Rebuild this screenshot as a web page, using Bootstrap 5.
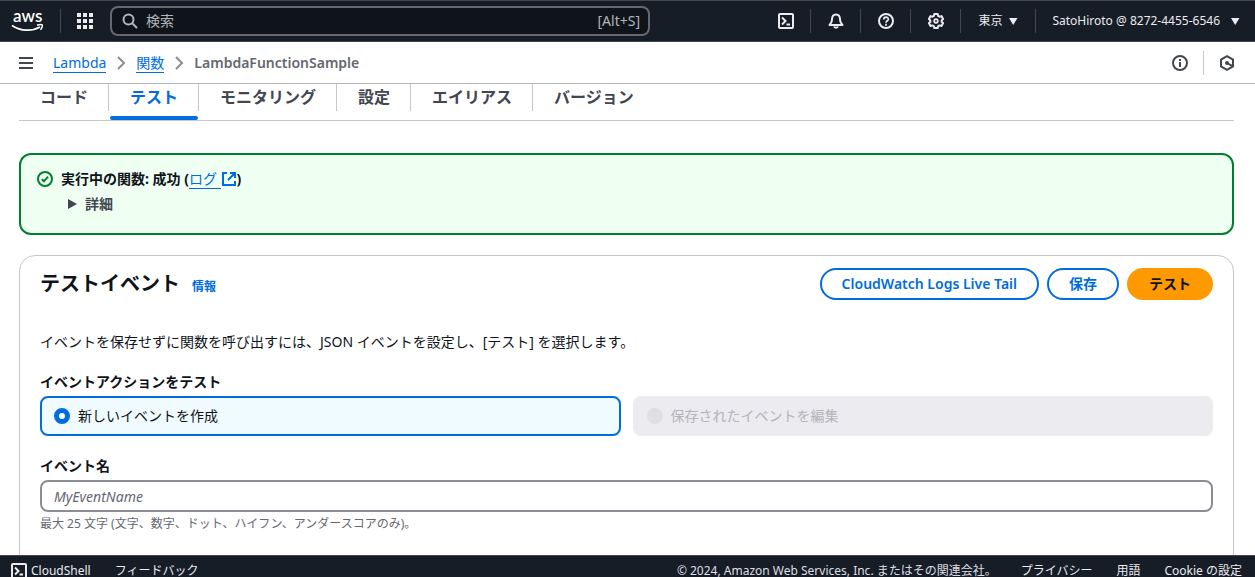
<!DOCTYPE html>
<html lang="ja">
<head>
<meta charset="utf-8">
<meta name="viewport" content="width=device-width, initial-scale=1">
<title>LambdaFunctionSample | 関数 | Lambda</title>
<link rel="stylesheet" href="https://cdn.jsdelivr.net/npm/bootstrap@5.3.0/dist/css/bootstrap.min.css">
<style>
:root { --ink:#0f141a; --navy:#161d26; --blue:#006ce0; --line:#c6c6cd; --slate:#424650; }
body { font-family:"Noto Sans","Noto Sans CJK JP",sans-serif; font-size:14px; line-height:20px; color:var(--ink); }
svg { display:block; flex:none; }
.ico { width:16px; height:16px; fill:none; stroke:currentColor; stroke-width:2; }
.bare { background:none; border:0; padding:0; color:inherit; }

.topbar { height:42px; background:var(--navy); border-top:1px solid var(--slate); border-bottom:1px solid var(--slate); color:#ebebf0; font-size:12px; }
.vline { width:1px; height:24px; background:var(--slate); flex:none; }
.vline-light { background:var(--line); }
.brand { width:60px; padding-left:12px; text-decoration:none; }
.apps { width:49px; padding-right:2px; }
.search { flex:0 1 540px; height:30px; background:var(--ink); border:2px solid #656871; border-radius:8px; padding:0 8px 0 10px; color:#b4b4bb; font-size:14px; }
.search input { color:#fff; min-width:0; outline:0; }
.search input::placeholder { color:#b4b4bb; opacity:1; }
.tool { width:49px; height:30px; }
.region { width:74px; gap:6px; }
.account { padding:0 15px 0 16px; gap:10px; white-space:nowrap; }
.tri { width:10px; height:8px; fill:currentColor; }

.crumbs { height:42px; border-bottom:1px solid #b4b4bb; padding:0 20px 0 18px; color:var(--slate); }
.crumbs a, .loglink { color:var(--blue); text-decoration:none; border-bottom:1px solid var(--blue); }
.crumbs nav { margin-left:19px; }
.crumbs .breadcrumb-item { color:#656871; font-weight:600; padding:0; }
.crumbs .breadcrumb-item a { font-weight:400; display:block; line-height:18px; padding-top:1px; }
.crumbs .breadcrumb-item::before { display:none; }
.chev { color:#8c8c94; margin:0 7px; }
.crumbtools { gap:15px; }

.pagebody { padding:0 21px 0 19px; min-height:0; }
.tabrow { height:37px; border-bottom:1px solid var(--line); font-size:16px; line-height:24px; font-weight:700; }
.tabrow a { color:var(--slate); text-decoration:none; display:block; height:36px; padding:1px 20px 0 21px; position:relative; }
.tabrow li { position:relative; padding-right:1px; }
.tabrow li:not(:last-child)::after { content:""; position:absolute; right:0; top:0; width:1px; height:27px; background:var(--line); }
.tabrow a.active { color:var(--blue); }
.tabrow a.active::after { content:""; position:absolute; left:1px; right:0; bottom:0; height:4px; border-radius:4px; background:var(--blue); }

.flash { background:#effff1; border:2px solid #00802f; border-radius:12px; margin-top:32px; padding:14px 16px 19px; }
.flash .ico { color:#00802f; }
.flash .loglink { display:inline-block; line-height:18px; font-weight:400; }
.flash details { margin:5px 0 0 30px; }
.flash summary { list-style:none; color:var(--slate); font-weight:600; font-size:14px; line-height:20px; }
.panel { border:1px solid var(--line); border-radius:16px; margin-top:20px; padding:12px 20px 40px; }
.panel h1 { font-size:20px; line-height:24px; font-weight:700; }
.info { font-size:12px; color:var(--blue); text-decoration:none; font-weight:600; }
.pill { height:32px; border-radius:20px; border:2px solid var(--blue); color:var(--blue); padding:0 20px; font-size:14px; line-height:20px; font-weight:600; }
.pill-main { background:#ff9900; border-color:#ff9900; color:var(--ink); }
.tiles { gap:12px; }
.tile { height:40px; flex:1 1 0; border:2px solid #ebebf0; border-radius:8px; padding:0 12px; gap:8px; background:#ebebf0; color:#b4b4bb; }
.tile.on { border-color:var(--blue); background:#f0fbff; color:var(--ink); }
.tile input { appearance:none; width:16px; height:16px; margin:0; border-radius:50%; background:#dedee3; }
.tile.on input { background:#fff; border:5px solid var(--blue); }
.namebox { height:32px; border:2px solid #8c8c94; border-radius:8px; padding:0 12px; font-size:14px; }
.namebox::placeholder { color:#656871; font-style:italic; opacity:1; }
.hint { font-size:12px; color:#656871; margin-top:2px; }
.flabel { font-weight:700; display:block; }

.foot { flex:0 0 22px; min-height:0; background:var(--navy); border-top:1px solid var(--slate); font-size:12px; line-height:20px; color:#dedee3; white-space:nowrap; }
.footrow { height:30px; padding:0 13px 0 11px; }
.foot a { color:#ebebf0; text-decoration:none; }
</style>
<script src="https://cdn.jsdelivr.net/npm/bootstrap@5.3.0/dist/js/bootstrap.bundle.min.js"></script>
</head>
<body class="vh-100 overflow-hidden d-flex flex-column bg-white">
<svg width="0" height="0" class="position-absolute" aria-hidden="true">
  <symbol id="shell" viewBox="0 0 16 16"><rect x="1" y="1" width="14" height="14" rx="1"/><path d="M4 4.500 7.500 8 4 11.500M8.500 11.500H12"/></symbol>
  <symbol id="down" viewBox="0 0 10 8"><path d="M1 1H9.500L5.200 8Z"/></symbol>
  <symbol id="chev" viewBox="0 0 16 16"><path d="M5 2l6 6-6 6"/></symbol>
</svg>

<header class="topbar d-flex align-items-center flex-shrink-0">
  <a href="#" class="brand" aria-label="AWS">
    <svg width="34" height="26" viewBox="0 0 34 26" overflow="visible"><text x="1" y="14" font-family="Lato, sans-serif" font-weight="600" font-size="17" fill="#fff">aws</text><path d="M0 17.500C9 23.500 20 23.500 28 19" fill="none" stroke="#fff" stroke-width="1.800"/><path d="M25 17.300c2-.8 4.500-1 5.200-.5.500.7-.2 3.500-1.800 5" fill="none" stroke="#fff" stroke-width="1.500"/></svg>
  </a>
  <span class="vline"></span>
  <button class="bare apps d-flex justify-content-center" aria-label="サービス">
    <svg width="16" height="16" viewBox="0 0 16 16" fill="#ebebf0"><path d="M0 0h4v4H0zM6 0h4v4H6zM12 0h4v4h-4zM0 6h4v4H0zM6 6h4v4H6zM12 6h4v4h-4zM0 12h4v4H0zM6 12h4v4H6zM12 12h4v4h-4z"/></svg>
  </button>
  <div class="search d-flex align-items-center">
    <svg class="ico" viewBox="0 0 16 16"><circle cx="6.500" cy="6.500" r="5"/><path d="M10 10l5 5"/></svg>
    <input class="bare flex-grow-1 ms-2" type="text" placeholder="検索" aria-label="検索">
    <span>[Alt+S]</span>
  </div>
  <div class="d-flex align-items-center ms-auto">
    <button class="bare tool d-flex justify-content-center align-items-center" aria-label="CloudShell"><svg class="ico"><use href="#shell"/></svg></button>
    <span class="vline"></span>
    <button class="bare tool d-flex justify-content-center align-items-center" aria-label="通知"><svg class="ico" viewBox="0 0 16 16"><path d="M8 1.500C5 1.500 4 4 4 6.500 4 9.500 2.500 10.500 1.500 12h13C13.500 10.500 12 9.500 12 6.500 12 4 11 1.500 8 1.500Z" stroke-linejoin="round"/><path d="M6 13.500c.5 1.500 3.500 1.500 4 0"/></svg></button>
    <span class="vline"></span>
    <button class="bare tool d-flex justify-content-center align-items-center" aria-label="ヘルプ"><svg class="ico" viewBox="0 0 16 16"><circle cx="8" cy="8" r="7"/><path d="M5.800 6.500C5.800 3.300 10.300 3.500 10.300 6.200 10.300 7.800 8 7.800 8 9.800M8 10.800v1.900" stroke-width="1.700"/></svg></button>
    <span class="vline"></span>
    <button class="bare tool d-flex justify-content-center align-items-center" aria-label="設定"><svg class="ico" viewBox="0 0 16 16"><path d="M6.300 1h3.400l.5 2 1.300.7 2-.6 1.600 2.900-1.500 1.400v1.300l1.500 1.400-1.600 2.900-2-.6-1.300.7-.5 2H6.300l-.5-2-1.300-.7-2 .6-1.600-2.900 1.500-1.400V7.400L.9 6l1.600-2.900 2 .6L5.800 3Z" stroke-width="2" stroke-linejoin="round"/><circle cx="8" cy="8" r="1.800" stroke-width="1.800"/></svg></button>
    <span class="vline"></span>
    <button class="bare region d-flex justify-content-center align-items-center">東京 <svg class="tri"><use href="#down"/></svg></button>
    <span class="vline"></span>
    <button class="bare account d-flex align-items-center">SatoHiroto @ 8272-4455-6546 <svg class="tri"><use href="#down"/></svg></button>
  </div>
</header>

<div class="crumbs d-flex align-items-center flex-shrink-0">
  <button class="bare" aria-label="メニュー"><svg class="ico" viewBox="0 0 16 16"><path d="M1 3h14M1 8h14M1 13h14"/></svg></button>
  <nav aria-label="breadcrumb">
    <ol class="breadcrumb m-0 align-items-center">
      <li class="breadcrumb-item"><a href="#">Lambda</a></li>
      <li aria-hidden="true"><svg class="ico chev"><use href="#chev"/></svg></li>
      <li class="breadcrumb-item"><a href="#">関数</a></li>
      <li aria-hidden="true"><svg class="ico chev"><use href="#chev"/></svg></li>
      <li class="breadcrumb-item active" aria-current="page">LambdaFunctionSample</li>
    </ol>
  </nav>
  <div class="crumbtools ms-auto d-flex align-items-center">
    <button class="bare" aria-label="情報"><svg class="ico" viewBox="0 0 16 16"><circle cx="8" cy="8" r="7"/><path d="M8 4v2M8 7v5"/></svg></button>
    <span class="vline vline-light"></span>
    <button class="bare" aria-label="診断"><svg class="ico" viewBox="0 0 16 16"><path d="M8 1.200 14 4.600v6.800L8 14.800 2 11.400V4.600Z"/><circle cx="8" cy="8" r="2" fill="currentColor" stroke="none"/><path d="M8 8l6 3.400"/></svg></button>
  </div>
</div>

<main class="pagebody flex-grow-1 overflow-hidden">
  <ul class="tabrow list-unstyled d-flex m-0">
    <li><a href="#">コード</a></li>
    <li><a href="#" class="active" aria-current="true">テスト</a></li>
    <li><a href="#">モニタリング</a></li>
    <li><a href="#">設定</a></li>
    <li><a href="#">エイリアス</a></li>
    <li><a href="#">バージョン</a></li>
  </ul>

  <section class="flash" role="status">
    <div class="d-flex align-items-center gap-2 fw-bold">
      <svg class="ico" viewBox="0 0 16 16"><circle cx="8" cy="8" r="7"/><path d="M4.800 8.200 7 10.300l4-4.600"/></svg>
      <div class="d-flex align-items-center"><span>実行中の関数: 成功 (</span><a class="loglink" href="#">ログ&nbsp;</a><a href="#" aria-label="ログを開く"><svg width="16" height="16" viewBox="0 0 16 16" fill="none" stroke="#006ce0" stroke-width="2"><path d="M6 2H2v12h12v-4M9 2h5v5M14 2 7 9"/></svg></a><span>)</span></div>
    </div>
    <details><summary class="d-flex align-items-center gap-2"><svg width="10" height="10" viewBox="0 0 10 10" fill="currentColor"><path d="M1 0 10 5 1 10Z"/></svg>詳細</summary></details>
  </section>

  <section class="panel">
    <div class="d-flex align-items-center">
      <div class="d-flex align-items-baseline gap-2"><h1 class="m-0">テストイベント</h1><a href="#" class="info ms-1">情報</a></div>
      <div class="d-flex gap-2 ms-auto">
        <button class="btn pill">CloudWatch Logs Live Tail</button>
        <button class="btn pill">保存</button>
        <button class="btn pill pill-main">テスト</button>
      </div>
    </div>
    <p class="mt-4 pt-2 mb-3">イベントを保存せずに関数を呼び出すには、JSON イベントを設定し、[テスト] を選択します。</p>
    <div role="radiogroup" aria-labelledby="act" class="pt-1">
      <span class="flabel mb-1" id="act">イベントアクションをテスト</span>
      <div class="tiles d-flex">
        <label class="tile on d-flex align-items-center"><input type="radio" name="mode" checked>新しいイベントを作成</label>
        <label class="tile d-flex align-items-center"><input type="radio" name="mode" disabled>保存されたイベントを編集</label>
      </div>
    </div>
    <label class="flabel mt-3 pt-1 mb-1" for="evname">イベント名</label>
    <input class="namebox w-100 d-block" id="evname" type="text" placeholder="MyEventName">
    <div class="hint">最大 25 文字 (文字、数字、ドット、ハイフン、アンダースコアのみ)。</div>
  </section>
</main>

<footer class="foot">
  <div class="footrow d-flex align-items-center">
    <a href="#" class="d-flex align-items-center gap-1"><svg class="ico"><use href="#shell"/></svg>CloudShell</a>
    <a href="#" class="ms-4">フィードバック</a>
    <span class="ms-auto">© 2024, Amazon Web Services, Inc. またはその関連会社。</span>
    <a href="#" class="ms-4">プライバシー</a>
    <a href="#" class="ms-4">用語</a>
    <a href="#" class="ms-4">Cookie の設定</a>
  </div>
</footer>
</body>
</html>
